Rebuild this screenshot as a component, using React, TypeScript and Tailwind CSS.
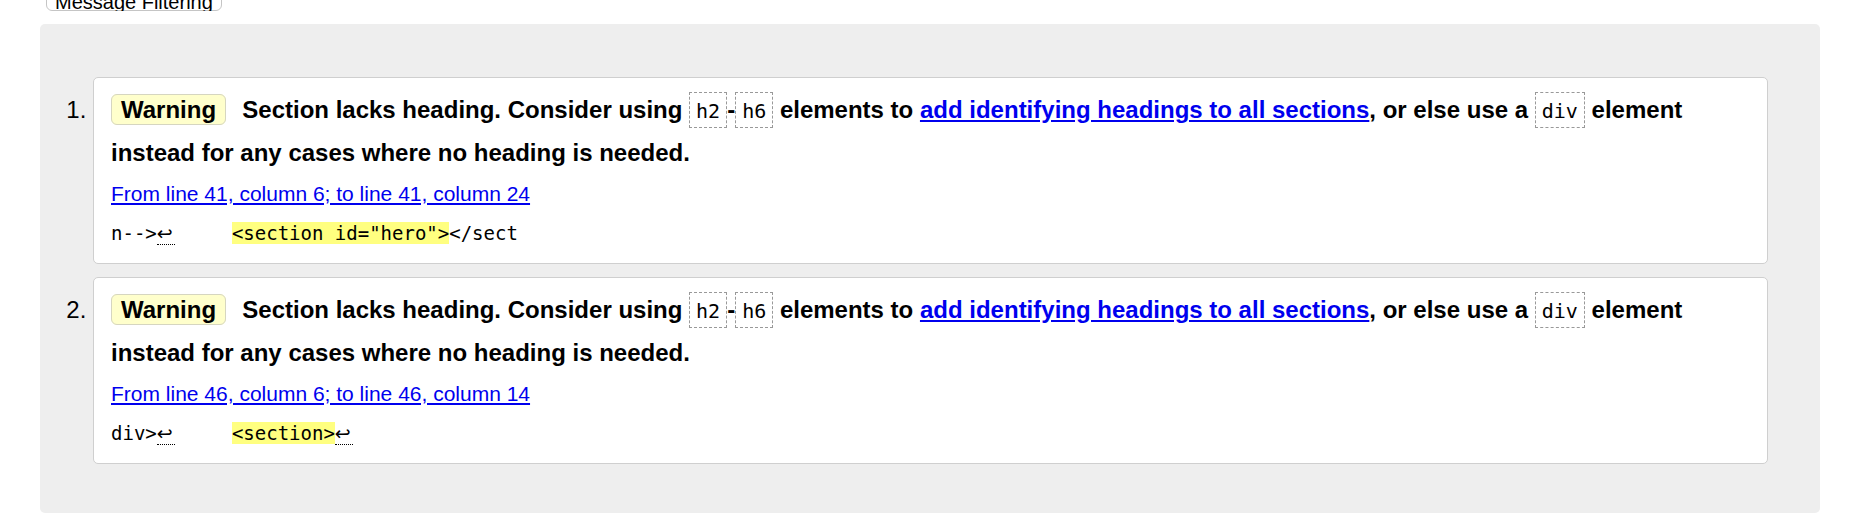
import { ReactNode } from "react";

interface Issue {
  location: string;
  before: string;
  highlight: string;
  after: string;
  trailingReturn: boolean;
}

const issues: Issue[] = [
  {
    location: "From line 41, column 6; to line 41, column 24",
    before: "n-->",
    highlight: '<section id="hero">',
    after: "</sect",
    trailingReturn: false,
  },
  {
    location: "From line 46, column 6; to line 46, column 14",
    before: "div>",
    highlight: "<section>",
    after: "",
    trailingReturn: true,
  },
];

const Code = ({ children }: { children: ReactNode }) => (
  <code className="font-['DejaVu_Sans_Mono',monospace] text-[20px] font-normal leading-none border border-dashed border-[#999] px-[6px] pt-[6px] pb-[4px]">
    {children}
  </code>
);

const Return = () => (
  <span className="font-['DejaVu_Sans',sans-serif] border-b border-dotted border-black pr-[2px]">↩</span>
);

const IssueCard = ({ issue }: { issue: Issue }) => (
  <li className="bg-white border border-[#cfcfcf] rounded-[5px] pl-[17px] pr-[17px] pt-[10px] pb-[18px] text-[24px]">
    <p className="font-bold leading-[43px] text-black">
      <span className="bg-[#ffffcc] border border-[#d6d6c0] rounded-[6px] px-[9px] py-[1px] mr-[9.5px] leading-none">Warning</span>{" "}
      Section lacks heading. Consider using <Code>h2</Code>-<Code>h6</Code> elements to{" "}
      <a href="#" className="text-[#0000ee] underline leading-none">add identifying headings to all sections</a>, or else use a{" "}
      <Code>div</Code> element instead for any cases where no heading is needed.
    </p>
    <p className="mt-[8px] text-[21px] leading-[24px]">
      <a href="#" className="text-[#0000ee] underline">{issue.location}</a>
    </p>
    <p className="mt-[15px] font-['DejaVu_Sans_Mono',monospace] text-[19px] leading-[24px] whitespace-pre text-black">
      {issue.before}
      <Return />
      {"     "}
      <mark className="bg-[#ffff80] text-black">{issue.highlight}</mark>
      {issue.after}
      {issue.trailingReturn ? <Return /> : null}
    </p>
  </li>
);

export default function App() {
  return (
    <div className="min-h-screen bg-white font-['Liberation_Sans',Arial,sans-serif] text-black">
      <div className="flex items-end h-[11px] overflow-hidden pl-[46px]">
        <button className="shrink-0 h-[26px] px-[8px] pt-[5px] border border-[#c5c5c5] rounded-[6px] bg-white text-[20px] leading-[23px] text-black">
          Message Filtering
        </button>
      </div>
      <section className="mt-[13px] ml-[40px] mr-[43px] bg-[#eeeeee] rounded-[5px] pt-[53px] pb-[49px] pl-[53px] pr-[52px]">
        <ol className="list-decimal list-outside flex flex-col gap-[13px] text-[24px]">
          {issues.map((issue, i) => (
            <IssueCard key={i} issue={issue} />
          ))}
        </ol>
      </section>
    </div>
  );
}
